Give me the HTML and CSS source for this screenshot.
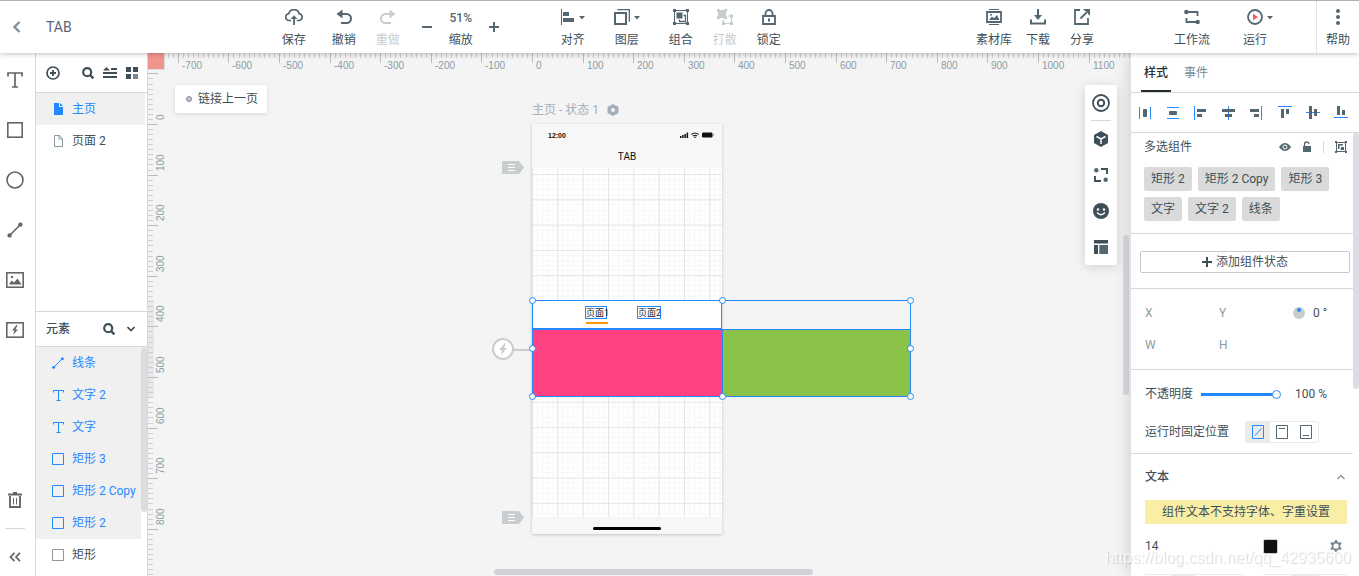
FILE: index.html
```html
<!DOCTYPE html>
<html lang="zh-CN">
<head>
<meta charset="utf-8">
<title>TAB</title>
<link rel="stylesheet" href="styles.css">
</head>
<body>
<header class="topbar">
  <div class="brand">
    <button class="back" aria-label="返回"><svg width="10" height="12" viewBox="0 0 10 12"><path d="M7.5 1 2.5 6l5 5" fill="none" stroke="#7f919b" stroke-width="2.4"/></svg></button>
    <h1 class="title">TAB</h1>
  </div>
  <nav class="tools">
    <button class="tool"><svg width="18" height="16" viewBox="0 0 18 16"><path d="M6.2 11.5H4.4a3.4 3.4 0 0 1-.6-6.8 5.3 5.3 0 0 1 10.3 0 3.4 3.4 0 0 1-.6 6.800H11.800" fill="none" stroke="#546771" stroke-width="1.7"/><path d="M9 16V9" stroke="#546771" stroke-width="1.8"/><path d="m5.600 10 3.400-3.800 3.400 3.800z" fill="#546771"/></svg><span>保存</span></button>
    <button class="tool gap-s"><svg width="16" height="16" viewBox="0 0 16 16"><path d="M3 5h7.500a4.300 4.300 0 0 1 0 9H5" fill="none" stroke="#546771" stroke-width="2"/><path d="M.5 5 6.500.6v8.800z" fill="#546771"/></svg><span>撤销</span></button>
    <button class="tool off" disabled><svg width="16" height="16" viewBox="0 0 16 16"><path d="M13 5H5.500a4.300 4.300 0 0 0 0 9H11" fill="none" stroke="#c8cdd0" stroke-width="2"/><path d="M15.500 5 9.500.6v8.800z" fill="#c8cdd0"/></svg><span>重做</span></button>
    <button class="step gap-s" aria-label="缩小"><svg width="10" height="10"><path d="M0 5h10" stroke="#546771" stroke-width="2"/></svg></button>
    <button class="tool"><b>51%</b><span>缩放</span></button>
    <button class="step" aria-label="放大"><svg width="10" height="10"><path d="M0 5h10M5 0v10" stroke="#546771" stroke-width="2"/></svg></button>
    <button class="tool gap-l"><svg width="24" height="16" viewBox="0 0 24 16"><path d="M.5 0v16" stroke="#546771"/><path d="M2 3h6v4H2zM2 9h11v4H2z" fill="#546771"/><path d="M18 7h6l-3 3.500z" fill="#546771"/></svg><span>对齐</span></button>
    <button class="tool gap-m"><svg width="26" height="16" viewBox="0 0 26 16"><path d="M1 4h11v11H1z" fill="none" stroke="#546771" stroke-width="2"/><path d="M3.500.7h11.800v12" fill="none" stroke="#546771" stroke-width="1.300"/><path d="M20 7h6l-3 3.500z" fill="#546771"/></svg><span>图层</span></button>
    <button class="tool gap-m"><svg width="16" height="16" viewBox="0 0 16 16"><path d="M1.500 1.500h13v13h-13z" fill="none" stroke="#546771"/><path d="M0 0h3v3H0zM13 0h3v3h-3zM0 13h3v3H0zM13 13h3v3h-3zM3.500 3.500h6v6h-6z" fill="#546771"/><path d="M10.500 6.500h2v6h-6v-2" fill="none" stroke="#546771" stroke-width="1.300"/></svg><span>组合</span></button>
    <button class="tool off" disabled><svg width="16" height="16" viewBox="0 0 16 16"><path d="M0 0h3v1h4V0h3v3H9v4h1v3H7V9H3v1H0V7h1V3H0z" fill="#c8cdd0"/><path d="M11 7h3.500v7.500h-8V11" fill="none" stroke="#c8cdd0" stroke-width="1.200"/><path d="M13 5.500h3v3h-3zM5 13h3v3H5zM13 13h3v3h-3z" fill="#c8cdd0"/></svg><span>打散</span></button>
    <button class="tool"><svg width="14" height="16" viewBox="0 0 14 16"><path d="M1 7h12v8H1zM3.500 7V4.500a3.500 3.500 0 0 1 7 0V7" fill="none" stroke="#546771" stroke-width="1.800"/><path d="M7 9.500v3" stroke="#546771" stroke-width="2"/></svg><span>锁定</span></button>
  </nav>
  <div class="spacer"></div>
  <nav class="tools">
    <button class="tool"><svg width="16" height="16" viewBox="0 0 16 16"><path d="M3 .5h10M3 15.500h10" stroke="#546771"/><path d="M1 3h14v10H1z" fill="none" stroke="#546771" stroke-width="1.800"/><path d="m3 11 3-3.500 2 1.800 3-3.300 2.500 5z" fill="#546771"/><circle cx="5" cy="5.700" r="1" fill="#546771"/></svg><span>素材库</span></button>
    <button class="tool"><svg width="16" height="16" viewBox="0 0 16 16"><path d="M1 10.500V14.500h14v-4M8 0v8" fill="none" stroke="#546771" stroke-width="2"/><path d="M4 6h8l-4 5z" fill="#546771"/></svg><span>下载</span></button>
    <button class="tool"><svg width="16" height="16" viewBox="0 0 16 16"><path d="M6 1H1v14h13v-6M6.500 9.500 14 2" fill="none" stroke="#546771" stroke-width="1.800"/><path d="M9 0h7v7l-2-2V2h-3z" fill="#546771"/></svg><span>分享</span></button>
    <button class="tool gap-xl"><svg width="16" height="16" viewBox="0 0 16 16"><path d="M2 3h11.500v4M14 13H2.500V9" fill="none" stroke="#546771" stroke-width="1.800"/><circle cx="2.300" cy="3" r="2.200" fill="#546771"/><circle cx="13.700" cy="13" r="2.200" fill="#546771"/></svg><span>工作流</span></button>
    <button class="tool gap-r"><svg class="run" width="26" height="16" viewBox="0 0 26 16"><circle cx="8" cy="8" r="7" fill="none" stroke="#546771" stroke-width="1.800"/><path d="m6 4.800 5 3.200-5 3.200z" fill="#ff5252"/><path d="M20 7h6l-3 3.500z" fill="#546771"/></svg><span>运行</span></button>
    <button class="tool help"><svg width="4" height="16" viewBox="0 0 4 16"><circle cx="2" cy="2" r="2" fill="#546771"/><circle cx="2" cy="8" r="2" fill="#546771"/><circle cx="2" cy="14" r="2" fill="#546771"/></svg><span>帮助</span></button>
  </nav>
</header>

<main class="workspace">
  <aside class="rail">
    <button aria-label="文字"><svg width="18" height="18" viewBox="0 0 18 18"><path d="M2 5.500V2h14v3.500M9 2v14M6 16h6" fill="none" stroke="#666" stroke-width="1.700"/></svg></button>
    <button aria-label="矩形"><svg width="18" height="18" viewBox="0 0 18 18"><rect x="1.800" y="1.800" width="14.400" height="14.400" fill="none" stroke="#666" stroke-width="1.600"/></svg></button>
    <button aria-label="圆形"><svg width="18" height="18" viewBox="0 0 18 18"><circle cx="9" cy="9" r="8" fill="none" stroke="#666" stroke-width="1.600"/></svg></button>
    <button aria-label="线条"><svg width="18" height="18" viewBox="0 0 18 18"><path d="M3.500 14.500 14.500 3.500" stroke="#666" stroke-width="1.600"/><circle cx="3.600" cy="14.400" r="2.200" fill="#666"/><circle cx="14.400" cy="3.600" r="2.200" fill="#666"/></svg></button>
    <button aria-label="图片"><svg width="18" height="18" viewBox="0 0 18 18"><rect x=".8" y="1.800" width="16.400" height="14.400" fill="none" stroke="#666" stroke-width="1.600"/><path d="m3 13.500 2.500-4 2.500 2 3.500-4 4 6z" fill="#666"/><circle cx="6" cy="6" r="1.200" fill="#666"/></svg></button>
    <button aria-label="动作"><svg width="18" height="18" viewBox="0 0 18 18"><rect x=".8" y="1.800" width="16.400" height="14.400" fill="none" stroke="#666" stroke-width="1.600"/><path d="M10.500 4 6 9.500h2.500L7 14l5-5.500H9.500L11.500 4z" fill="#666"/></svg></button>
    <div class="rail-end">
      <button aria-label="删除"><svg width="14" height="16" viewBox="0 0 14 16"><path d="M0 2.500h14M5 1h4" stroke="#666" stroke-width="1.800"/><path d="M2 4v11h10V4" fill="none" stroke="#666" stroke-width="1.900"/><path d="M5.500 6v6.500M8.500 6v6.500" stroke="#666"/></svg></button>
      <hr>
      <button aria-label="收起"><svg width="12" height="10" viewBox="0 0 12 10"><path d="M5.500.8 1.500 5l4 4.200M11 .8 7 5l4 4.200" fill="none" stroke="#666" stroke-width="1.800"/></svg></button>
    </div>
  </aside>

  <aside class="outline">
    <section class="pages">
      <div class="page-tools">
        <button aria-label="新建页面"><svg width="14" height="14" viewBox="0 0 14 14"><circle cx="7" cy="7" r="6" fill="none" stroke="#3f4f58" stroke-width="1.700"/><path d="M4 7h6M7 4v6" stroke="#3f4f58" stroke-width="1.800"/></svg></button>
        <button class="push" aria-label="搜索"><svg width="12" height="12" viewBox="0 0 12 12"><circle cx="5.200" cy="5.200" r="4" fill="none" stroke="#3f4f58" stroke-width="2.200"/><path d="m8 8 3.400 3.400" stroke="#3f4f58" stroke-width="2.400"/></svg></button>
        <button aria-label="排序"><svg width="14" height="12" viewBox="0 0 14 12"><path d="M8 2h6M0 6h14M0 10h14" stroke="#3f4f58" stroke-width="1.900"/><path d="M0 3.500h7L3.500 0z" fill="#3f4f58"/></svg></button>
        <button aria-label="网格"><svg width="12" height="12" viewBox="0 0 12 12"><path d="M0 0h5v5H0zM7 0h5v5H7zM0 7h5v5H0z" fill="#3f4f58"/><path d="M7 7h5v5H7z" fill="#7c8896"/></svg></button>
      </div>
      <ul class="list">
        <li class="row picked"><svg width="12" height="12" viewBox="0 0 12 12"><path d="M2 0h5v4h4v8H2z" fill="#2489ff"/><path d="m8 0 3 3H8z" fill="#2489ff"/></svg>主页</li>
        <li class="row"><svg width="12" height="12" viewBox="0 0 12 12"><path d="M2.500.5h5l3 3.500v7.500h-8zM7 .5V4h3.500" fill="none" stroke="#8b99a2"/></svg>页面 2</li>
      </ul>
    </section>
    <section class="elements">
      <div class="elements-head">
        <h2>元素</h2>
        <button aria-label="搜索元素"><svg width="12" height="12" viewBox="0 0 12 12"><circle cx="5.200" cy="5.200" r="4" fill="none" stroke="#3f4f58" stroke-width="2.200"/><path d="m8 8 3.400 3.400" stroke="#3f4f58" stroke-width="2.400"/></svg></button>
        <button aria-label="折叠"><svg width="8" height="6" viewBox="0 0 8 6"><path d="m.5 1 3.500 3.500L7.500 1" fill="none" stroke="#3f4f58" stroke-width="1.700"/></svg></button>
      </div>
      <div class="scroller">
        <ul class="list">
          <li class="row picked"><svg width="12" height="12" viewBox="0 0 12 12"><path d="M1.500 10.500 10.500 1.500" stroke="#2489ff"/><circle cx="1.700" cy="10.300" r="1.500" fill="#2489ff"/><circle cx="10.300" cy="1.700" r="1.500" fill="#2489ff"/></svg>线条</li>
          <li class="row picked"><svg width="12" height="12" viewBox="0 0 12 12"><path d="M1.500 3.500v-2h10v2M6.500 1.500v10M4.500 11.500h4" fill="none" stroke="#2489ff"/></svg>文字 2</li>
          <li class="row picked"><svg width="12" height="12" viewBox="0 0 12 12"><path d="M1.500 3.500v-2h10v2M6.500 1.500v10M4.500 11.500h4" fill="none" stroke="#2489ff"/></svg>文字</li>
          <li class="row picked"><svg width="12" height="12"><path d="M.5.5h11v11H.5z" fill="none" stroke="#2489ff"/></svg>矩形 3</li>
          <li class="row picked"><svg width="12" height="12"><path d="M.5.5h11v11H.5z" fill="none" stroke="#2489ff"/></svg>矩形 2 Copy</li>
          <li class="row picked"><svg width="12" height="12"><path d="M.5.5h11v11H.5z" fill="none" stroke="#2489ff"/></svg>矩形 2</li>
          <li class="row"><svg width="12" height="12"><path d="M.5.5h11v11H.5z" fill="none" stroke="#8b99a2"/></svg>矩形</li>
        </ul>
        <div class="track"><i class="thumb"></i></div>
      </div>
    </section>
  </aside>

  <section class="canvas">
    <svg class="ruler-x" id="ruler-x"></svg>
    <svg class="ruler-y" id="ruler-y"></svg>
    <div class="corner"></div>
    <button class="prev-link"><i></i>链接上一页</button>

    <div class="state-name">主页 - 状态 1 <svg width="12" height="12" viewBox="0 0 12 12"><path d="M6 0l5.500 3v6L6 12 .5 9V3z" fill="#a7aebb"/><circle cx="6" cy="6" r="2" fill="#f4f4f4"/></svg></div>
    <div class="phone">
      <div class="statusbar">
        <span>12:00</span>
        <svg width="34" height="6" viewBox="0 0 34 6"><path d="M0 4h1.500v2H0zM2.200 3h1.500v3H2.200zM4.400 2h1.500v4H4.400zM6.600.5h1.500V6H6.600z" fill="#111"/><path d="M11.500 2.500q3.500-3 7 0M13 4q2-1.600 4 0" fill="none" stroke="#111" stroke-width="1.100"/><circle cx="15" cy="5.300" r=".8" fill="#111"/><rect x="22" y=".5" width="10.500" height="5" rx="1.200" fill="#111"/><path d="M33.300 2v2" stroke="#888"/></svg>
      </div>
      <div class="navbar">TAB</div>
      <svg class="grid" viewBox="0 88 375 690" preserveAspectRatio="none">
        <defs>
          <pattern id="fine" width="10" height="10" patternUnits="userSpaceOnUse"><path d="M0 1h10M1 0v10" stroke="#f8f8f8" stroke-width="2" fill="none"/></pattern>
          <pattern id="bold" width="50" height="50" patternUnits="userSpaceOnUse"><path d="M0 1h50M1 0v50" stroke="#e5e5e5" stroke-width="2" fill="none"/></pattern>
        </defs>
        <rect y="88" width="375" height="690" fill="url(#fine)"/><rect y="88" width="375" height="690" fill="url(#bold)"/>
      </svg>
      <div class="homebar"><i></i></div>
    </div>
    <svg class="anchor anchor-top" width="22" height="13" viewBox="0 0 22 13"><path d="M1 0h16l5 6.500-5 6.500H1q-1 0-1-1V1q0-1 1-1z" fill="#c8cdd0"/><path d="M6 3.500h7M6 6.500h7M6 9.500h7" stroke="#fff"/></svg>
    <svg class="anchor anchor-bottom" width="22" height="13" viewBox="0 0 22 13"><path d="M1 0h16l5 6.500-5 6.500H1q-1 0-1-1V1q0-1 1-1z" fill="#c8cdd0"/><path d="M6 3.500h7M6 6.500h7M6 9.500h7" stroke="#fff"/></svg>
    <svg class="event" width="42" height="22" viewBox="0 0 42 22"><path d="M21 12h17" stroke="#c8cdd0" stroke-width="2"/><circle cx="11" cy="11" r="10" fill="#fff" stroke="#c8cdd0" stroke-width="2"/><path d="M13 5 7 12h3L9 17l6-7h-3l2-5z" fill="#c8cdd0"/></svg>

    <div class="artwork">
      <div class="tabs-box"></div>
      <div class="pink-box"></div>
      <div class="green-box"></div>
      <div class="tab-text tab-one">页面1</div>
      <div class="tab-text tab-two">页面2</div>
      <div class="tab-line"></div>
      <svg class="handles" width="386" height="104" viewBox="-4 -4 386 104">
        <path d="M.5.5h378v96H.5z" fill="none" stroke="#2489ff"/>
        <g fill="#fff" stroke="#2489ff"><circle cx=".5" cy=".5" r="3"/><circle cx="190.500" cy=".5" r="3"/><circle cx="378.500" cy=".5" r="3"/><circle cx=".5" cy="48.500" r="3"/><circle cx="378.500" cy="48.500" r="3"/><circle cx=".5" cy="96.500" r="3"/><circle cx="190.500" cy="96.500" r="3"/><circle cx="378.500" cy="96.500" r="3"/></g>
      </svg>
    </div>

    <div class="palette">
      <button aria-label="目标"><svg width="18" height="18" viewBox="0 0 18 18"><circle cx="9" cy="9" r="8" fill="none" stroke="#3f4f58" stroke-width="1.800"/><circle cx="9" cy="9" r="3.200" fill="none" stroke="#3f4f58" stroke-width="2"/></svg></button>
      <button aria-label="组件"><svg width="16" height="16" viewBox="0 0 16 16"><path d="m8 0 7 4v8l-7 4-7-4V4z" fill="#3f4f58"/><path d="M3.500 5.500 8 8l4.500-2.500M8 8v5" fill="none" stroke="#fff" stroke-width="1.500"/></svg></button>
      <button aria-label="母版"><svg width="14" height="14" viewBox="0 0 14 14"><path d="M7 1h6v5M1 8v5h6" fill="none" stroke="#3f4f58" stroke-width="1.900"/><circle cx="2.300" cy="2.300" r="2.200" fill="#546771"/><circle cx="11.700" cy="11.700" r="2.200" fill="#546771"/></svg></button>
      <button aria-label="图标"><svg width="16" height="16" viewBox="0 0 16 16"><circle cx="8" cy="8" r="8" fill="#3f4f58"/><circle cx="5" cy="6.500" r="1.200" fill="#fff"/><circle cx="11" cy="6.500" r="1.200" fill="#fff"/><path d="M4 9.500q4 4.500 8 0" fill="none" stroke="#fff" stroke-width="1.300"/></svg></button>
      <button aria-label="模板"><svg width="14" height="14" viewBox="0 0 14 14"><path d="M0 0h14v3.500H0zM0 5h4v9H0z" fill="#3f4f58"/><path d="M5.300 5H14v9H5.300z" fill="#546771"/></svg></button>
    </div>
    <i class="bar-y"></i>
    <i class="bar-x"></i>
  </section>

  <aside class="inspector">
    <div class="tabs"><button class="tab on">样式</button><button class="tab">事件</button></div>
    <div class="aligns">
      <button aria-label="水平分布"><svg width="14" height="14"><path d="M1.500 1v12M12.500 1v12" stroke="#2489ff"/><rect x="5" y="3" width="4" height="8" rx="1" fill="#546771"/></svg></button>
      <button aria-label="垂直分布"><svg width="14" height="14"><path d="M1 1.500h12M1 12.500h12" stroke="#2489ff"/><rect x="3" y="5" width="8" height="4" rx="1" fill="#546771"/></svg></button>
      <button aria-label="左对齐"><svg width="14" height="14"><path d="M.5 0v14" stroke="#2489ff"/><path d="M3 3h9v3H3zM3 8h5v3H3z" fill="#546771"/></svg></button>
      <button aria-label="水平居中"><svg width="14" height="14"><path d="M6.500 0v14" stroke="#2489ff"/><path d="M0 3h13v3H0zM3 8h7v3H3z" fill="#546771"/></svg></button>
      <button aria-label="右对齐"><svg width="14" height="14"><path d="M11.500 0v14" stroke="#2489ff"/><path d="M0 3h9v3H0zM4 8h5v3H4z" fill="#546771"/></svg></button>
      <button aria-label="顶对齐"><svg width="14" height="14"><path d="M0 .5h14" stroke="#2489ff"/><path d="M3 3h3v9H3zM8 3h3v5H8z" fill="#546771"/></svg></button>
      <button aria-label="垂直居中"><svg width="14" height="14"><path d="M0 6.500h14" stroke="#2489ff"/><path d="M3 0h3v13H3zM8 3h3v7H8z" fill="#546771"/></svg></button>
      <button aria-label="底对齐"><svg width="14" height="14"><path d="M0 11.500h14" stroke="#2489ff"/><path d="M3 0h3v9H3zM8 4h3v5H8z" fill="#546771"/></svg></button>
    </div>
    <div class="props">
      <section class="block multi">
        <div class="multi-head">
          <h3>多选组件</h3>
          <button aria-label="显示"><svg width="12" height="8" viewBox="0 0 12 8"><path d="M0 4q6-8 12 0-6 8-12 0z" fill="#546771"/><circle cx="6" cy="4" r="2" fill="#546771" stroke="#fff"/></svg></button>
          <button aria-label="解锁"><svg width="10" height="12" viewBox="0 0 10 12"><path d="M1 5h8v6H1z" fill="#546771"/><path d="M2.500 5V3.500a2.200 2.200 0 0 1 4.500-.5" fill="none" stroke="#546771" stroke-width="1.300"/></svg></button>
          <i class="sep"></i>
          <button aria-label="编组"><svg width="12" height="12" viewBox="0 0 12 12"><path d="M1.500 1.500h9v9h-9z" fill="none" stroke="#546771"/><path d="M0 0h2v2H0zM10 0h2v2h-2zM0 10h2v2H0zM10 10h2v2h-2zM3 3h5v1.500H4.500V8H3zM6 6h3v3H5.500z" fill="#546771"/></svg></button>
        </div>
        <div class="tags"><span>矩形 2</span><span>矩形 2 Copy</span><span>矩形 3</span><span>文字</span><span>文字 2</span><span>线条</span></div>
      </section>
      <section class="block add">
        <button class="add-state"><svg width="10" height="10"><path d="M0 5h10M5 0v10" stroke="#3f4f58" stroke-width="2"/></svg>添加组件状态</button>
      </section>
      <section class="block geometry">
        <label>X<input type="text"></label><label>Y<input type="text"></label>
        <label class="angle"><svg width="12" height="12"><circle cx="6" cy="6" r="6" fill="#c8cdd0"/><circle cx="6" cy="3" r="2" fill="#2489ff"/></svg><input type="text" value="0 °" aria-label="旋转"></label>
        <label>W<input type="text"></label><label>H<input type="text"></label>
      </section>
      <section class="block look">
        <div class="field"><label for="opacity">不透明度</label><input class="slider" id="opacity" type="range" value="100"><input class="percent" type="text" value="100 %" aria-label="不透明度数值"></div>
        <div class="field"><span>运行时固定位置</span>
          <div class="segments">
            <label><input type="radio" name="pin" aria-label="不固定" checked><svg width="12" height="14"><path d="M.5.5h11v13H.5zM3 10.500 9.500 3.500" fill="none" stroke="#2489ff"/></svg></label>
            <label><input type="radio" name="pin" aria-label="固定顶部"><svg width="12" height="14"><path d="M.5.5h11v13H.5zM3 3.500h6" fill="none" stroke="#546771"/></svg></label>
            <label><input type="radio" name="pin" aria-label="固定底部"><svg width="12" height="14"><path d="M.5.5h11v13H.5zM3 10.500h6" fill="none" stroke="#546771"/></svg></label>
          </div>
        </div>
      </section>
      <section class="type">
        <div class="type-head"><h3>文本</h3><button aria-label="折叠文本"><svg width="8" height="6" viewBox="0 0 8 6"><path d="M.5 5 4 1.500 7.500 5" fill="none" stroke="#8b99a2" stroke-width="1.500"/></svg></button></div>
        <p class="notice">组件文本不支持字体、字重设置</p>
        <div class="type-row"><input type="text" value="14" aria-label="字号"><button class="swatch" aria-label="颜色"></button><button class="gear" aria-label="设置"><svg width="12" height="12" viewBox="0 0 12 12"><path d="M5 0h2l.5 1.700 1.300.8 1.800-.5 1 1.800L10.300 5v2l1.300 1.200-1 1.800-1.800-.5-1.300.8L7 12H5l-.5-1.700-1.300-.8-1.800.5-1-1.800L1.700 7V5L.4 3.800 1.400 2l1.800.5 1.300-.8z" fill="#7c8896"/><circle cx="6" cy="6" r="2.600" fill="#fff"/></svg></button></div>
        <div class="style-row"><div class="seg four"><i></i><i class="lit"></i><i></i><i></i></div><div class="seg three"><i></i><i class="lit"></i><i></i></div></div>
      </section>
      <i class="props-bar"></i>
    </div>
  </aside>
</main>
<div class="watermark">https://blog.csdn.net/qq_42935600</div>
<script src="rulers.js"></script>
</body>
</html>
```
FILE: styles.css
```css
* { box-sizing: border-box; }
body {
  margin: 0; height: 100vh; display: flex; flex-direction: column; overflow: hidden;
  font: 12px/16px Roboto, "Noto Sans CJK SC", sans-serif; color: #3f4f58; background: #fff;
}
button { font: inherit; color: inherit; background: none; border: 0; padding: 0; margin: 0; display: flex; align-items: center; justify-content: center; }
input { font: inherit; color: inherit; border: 0; padding: 0; margin: 0; background: none; min-width: 0; }
h1, h2, h3, p, ul { margin: 0; padding: 0; font-size: 12px; font-weight: 400; list-style: none; }
svg { display: block; flex: none; }

.topbar { position: relative; z-index: 5; flex: none; height: 53px; display: flex; border-top: 1px solid #b0b0b0; background: #fff; box-shadow: 0 1px 5px rgba(0,0,0,.25); }
.brand { flex: 3 1 0; display: flex; align-items: center; gap: 24px; }
.back { margin-left: 12px; }
.title { font-size: 14px; color: #5a6578; }
.spacer { flex: 2 1 0; }
.tools { display: flex; flex: none; }
.tool { width: 44px; flex-direction: column; justify-content: flex-start; padding-top: 8px; gap: 7px; white-space: nowrap; }
.tool b { height: 16px; line-height: 18px; font-weight: 500; color: #546771; }
.tool.off { color: #c8cdd0; }
.step { width: 23px; }
.gap-s { margin-left: 6px; }
.gap-m { margin-left: 10px; }
.gap-l { margin-left: 45px; }
.gap-r { margin-left: 19px; }
.gap-xl { margin-left: 66px; }
.run { margin-left: 10px; }
.help { margin-left: 39px; width: 43px; border-left: 1px solid #e3e3e3; }

.workspace { flex: 1; min-height: 0; display: flex; }
.rail { flex: none; width: 36px; padding: 2px 5px 0 0; display: flex; flex-direction: column; border-right: 1px solid #d8d8d8; }
.rail button { flex: none; width: 30px; height: 50px; }
.rail-end { margin-top: auto; }
.rail hr { width: 20px; margin: 3px 5px; border: 0; border-top: 1px solid #d8d8d8; }
.rail .rail-end button:last-child { height: 44px; padding-top: 6px; }

.outline { flex: none; width: 112px; display: flex; flex-direction: column; border-right: 1px solid #d8d8d8; }
.pages { flex: none; height: 258px; }
.page-tools { height: 40px; padding: 0 9px 0 10px; display: flex; align-items: center; gap: 9px; border-bottom: 1px solid #d8d8d8; }
.push { margin-left: auto; }
.row { height: 32px; display: flex; align-items: center; gap: 8px; padding-left: 16px; white-space: nowrap; }
.row.picked { color: #2489ff; background: #f0f0f0; }
.pages .list { margin-right: 2px; }
.elements { flex: 1; min-height: 0; display: flex; flex-direction: column; border-top: 1px solid #d8d8d8; }
.elements-head { flex: none; height: 35px; padding: 0 12px 0 10px; display: flex; align-items: center; gap: 12px; border-bottom: 1px solid #d8d8d8; }
.elements-head h2 { flex: 1; font-weight: 500; }
.scroller { flex: 1; min-height: 0; display: flex; overflow: hidden; }
.scroller .list { flex: 1; min-width: 0; }
.track { flex: none; width: 6px; }
.thumb { display: block; height: 165px; border-radius: 3px; background: #dcdce2; }

.canvas { position: relative; flex: 1; min-width: 0; overflow: hidden; background: #f4f4f4; }
.ruler-x, .ruler-y { position: absolute; left: 0; top: 0; width: 100%; height: 100%; font: 10px "Liberation Sans", sans-serif; fill: #8b9ca5; }
.corner { position: absolute; left: 0; top: 0; width: 17px; height: 17px; background: #f1948d; border: solid #ddd; border-width: 0 1px 1px 0; }
.prev-link { position: absolute; left: 27px; top: 32px; height: 28px; padding: 0 9px 0 11px; gap: 6px; border-radius: 2px; background: #fff; box-shadow: 0 1px 4px rgba(0,0,0,.12); }
.prev-link i { width: 6px; height: 6px; border: 1px solid #858c9c; border-radius: 3px; background: #bfc3cc; }
.state-name { position: absolute; left: 384px; top: 49px; display: flex; align-items: center; gap: 8px; color: #a7aebb; white-space: nowrap; }
.phone { position: absolute; left: 384px; top: 71px; width: 190px; height: 410px; display: flex; flex-direction: column; background: #fff; box-shadow: 0 1px 3px rgba(0,0,0,.2); color: #111; }
.statusbar { height: 22px; padding: 0 8px 0 16px; display: flex; align-items: center; justify-content: space-between; background: #f7f7f7; font: bold 7px "Liberation Sans", sans-serif; }
.navbar { height: 22px; line-height: 22px; text-align: center; background: #f7f7f7; font-size: 10px; }
.grid { width: 100%; flex: 1; min-height: 0; }
.homebar { height: 17px; padding-top: 10px; background: #f7f7f7; }
.homebar i { display: block; width: 68px; height: 3px; margin: 0 auto; border-radius: 2px; background: #000; }
.anchor { position: absolute; left: 354px; }
.anchor-top { top: 108px; }
.anchor-bottom { top: 458px; }
.event { position: absolute; left: 344px; top: 285px; }
.artwork { position: absolute; left: 384px; top: 247px; width: 379px; height: 97px; }
.artwork > * { position: absolute; }
.tabs-box { left: 0; top: 0; width: 190px; height: 29px; background: #fff; border: 1px solid #2489ff; }
.pink-box { left: 0; top: 29px; width: 191px; height: 68px; background: #ff4081; border: 1px solid #2489ff; }
.green-box { left: 190px; top: 29px; width: 189px; height: 68px; background: #8bc34a; border: 1px solid #2489ff; }
.tab-text { top: 6px; height: 13px; border: 1px solid #2489ff; color: #222; font-size: 9px; line-height: 12px; white-space: nowrap; }
.tab-one { left: 53px; width: 22px; }
.tab-two { left: 105px; width: 24px; }
.tab-line { left: 54px; top: 22px; width: 22px; height: 2px; background: #ff9800; }
.handles { left: -4px; top: -4px; }
.palette { position: absolute; right: 14px; top: 32px; width: 32px; height: 180px; display: flex; flex-direction: column; border-radius: 2px; background: #fff; box-shadow: 0 2px 12px rgba(0,0,0,.14); }
.palette button { height: 36px; }
.palette button:first-child { margin: 0 6px; border-bottom: 1px solid #d8d8d8; }
.bar-x, .bar-y { position: absolute; border-radius: 3px; background: #d1d1d7; }
.bar-x { left: 346px; bottom: 1px; width: 319px; height: 6px; }
.bar-y { right: 2px; top: 182px; width: 6px; height: 160px; background: #d9d9df; }

.inspector { position: relative; flex: none; width: 228px; display: flex; flex-direction: column; background: #fff; box-shadow: 0 0 16px rgba(0,0,0,.18); }
.tabs { flex: none; height: 40px; padding-left: 10px; display: flex; gap: 10px; border-bottom: 1px solid #d8d8d8; }
.tab { width: 30px; padding-top: 1px; color: #7c8896; white-space: nowrap; }
.tab.on { padding-top: 3px; font-weight: 500; color: #222c30; border-bottom: 2px solid #222c30; }
.aligns { flex: none; height: 40px; padding: 0 11px 0 7px; display: flex; align-items: center; justify-content: space-between; border-bottom: 1px solid #d8d8d8; }
.props { position: relative; flex: 1; min-height: 0; overflow: hidden; }
.props-bar { position: absolute; right: 0; top: 0; width: 6px; height: 256px; border-radius: 3px; background: #dcdce2; }
.block { margin-right: 6px; border-bottom: 1px solid #d8d8d8; }
.multi { padding: 6px 6px 12px 13px; }
.multi-head { display: flex; align-items: center; gap: 11px; }
.multi-head h3 { flex: 1; }
.sep { width: 1px; height: 12px; background: #d8d8d8; }
.tags { display: flex; flex-wrap: wrap; gap: 6px; margin: 12px -6px 0 0; }
.tags span { height: 24px; line-height: 24px; padding: 0 7px; border-radius: 2px; background: #dadada; white-space: nowrap; }
.add { padding: 17px 3px 15px 9px; }
.add-state { width: 100%; height: 22px; gap: 4px; border: 1px solid #c5cbd0; border-radius: 2px; }
.geometry { display: grid; grid-template-columns: 74px 74px 1fr; row-gap: 16px; padding: 16px 0 16px 14px; color: #8b9ca5; }
.geometry label { display: flex; align-items: center; gap: 8px; min-width: 0; }
.geometry input { width: 40px; color: #3f4f58; }
.look { padding: 16px 0 9px 14px; }
.field { display: flex; align-items: center; gap: 8px; height: 16px; white-space: nowrap; }
.field + .field { height: 24px; margin-top: 18px; gap: 16px; }
.slider { -webkit-appearance: none; appearance: none; width: 80px; height: 10px; background: linear-gradient(#2489ff, #2489ff) 0 4px / 76px 3px no-repeat; }
.slider::-webkit-slider-thumb { -webkit-appearance: none; width: 9px; height: 9px; border: 1px solid #2489ff; border-radius: 50%; background: #fff; }
.percent { width: 40px; margin-left: 6px; }
.segments { display: flex; height: 22px; border: 1px solid #ebebeb; border-radius: 2px; }
.segments label { width: 24px; display: grid; place-items: center; }
.segments label:has(:checked) { background: #ebebeb; }
.segments input { grid-area: 1 / 1; appearance: none; width: 100%; height: 100%; }
.segments svg { grid-area: 1 / 1; pointer-events: none; }
.type { padding: 15px 12px 0 14px; }
.type-head { display: flex; justify-content: space-between; padding-right: 2px; }
.type-head h3 { font-weight: 500; }
.notice { height: 24px; margin-top: 15px; line-height: 24px; text-align: center; background: #f8eea5; }
.type-row { display: flex; align-items: center; height: 24px; margin-top: 10px; padding-right: 5px; }
.type-row input { width: 40px; }
.swatch { width: 15px; height: 15px; margin: 0 auto 0 78px; border: 1px solid #ccc; border-radius: 2px; background: #111; }
.style-row { display: flex; justify-content: space-between; margin-top: 16px; }
.seg { display: flex; height: 24px; border: 1px solid #ebebeb; border-radius: 2px; }
.seg i { flex: 1; }
.lit { background: #ebebeb; }
.four { width: 100px; }
.three { width: 84px; }
.watermark { position: fixed; right: 8px; bottom: 8px; z-index: 9; font: 16px/20px "Liberation Sans", sans-serif; color: rgba(255,255,255,.7); text-shadow: 1px 1px 1px rgba(0,0,0,.15); pointer-events: none; }
```
FILE: rulers.js
```js
// Both rulers share one scale: 100 design units at 51% zoom.
const NS = 'http://www.w3.org/2000/svg';
const STEP = 5.06;

function add(parent, tag, attrs, text) {
  const el = document.createElementNS(NS, tag);
  for (const key in attrs) el.setAttribute(key, attrs[key]);
  if (text !== undefined) el.textContent = text;
  parent.appendChild(el);
}

function draw(id, origin, length, vertical) {
  const svg = document.getElementById(id);
  if (vertical) add(svg, 'rect', { x: 0, y: 247, width: 6, height: 97, fill: '#e8e8e8' });
  for (let n = Math.ceil((18 - origin) / STEP); origin + n * STEP < length; n++) {
    const p = Math.round(origin + n * STEP);
    const major = n % 10 === 0;
    const size = major ? 10 : 5;
    add(svg, 'rect', vertical
      ? { x: 0, y: p, width: size, height: 1, fill: major ? '#bcbcbc' : '#cfcfcf' }
      : { x: p, y: 0, width: 1, height: size, fill: major ? '#bcbcbc' : '#cfcfcf' });
    // A vertical label runs back from its tick, so it needs room below the corner.
    if (!major || (vertical && p < 50)) continue;
    add(svg, 'text', vertical
      ? { transform: `translate(16 ${p - 4}) rotate(-90)` }
      : { x: p + 4, y: 16 }, n * 10);
  }
}

draw('ruler-x', 384, document.querySelector('.canvas').clientWidth, false);
draw('ruler-y', 71, document.querySelector('.canvas').clientHeight, true);
```
